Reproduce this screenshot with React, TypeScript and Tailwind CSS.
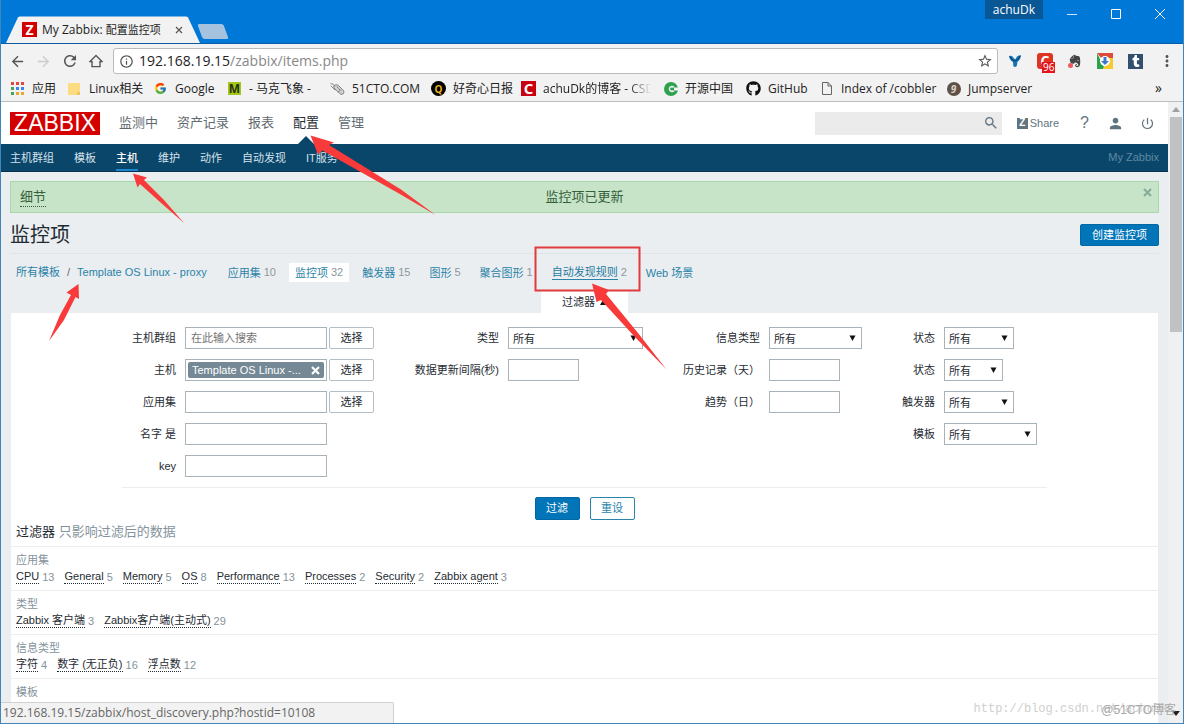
import type { ReactNode } from "react";
import { FaEvernote, FaGithub, FaTumblr } from "react-icons/fa";
import { FcGoogle } from "react-icons/fc";
import {
  MdArrowBack,
  MdArrowForward,
  MdInfoOutline,
  MdMoreVert,
  MdPerson,
  MdPowerSettingsNew,
  MdRefresh,
  MdSearch,
  MdStarBorder,
} from "react-icons/md";

const chromeFont = "font-['Open_Sans','Noto_Sans_CJK_SC',sans-serif]";
const pageFont = "font-['Liberation_Sans','Noto_Sans_CJK_SC',sans-serif]";

/* ---------- Browser window ---------- */

function TitleBar() {
  return (
    <div className="flex h-11 shrink-0 items-start justify-between border-b border-[#0c5ba6] bg-[#0078d7]">
      <div className="flex h-full items-end pl-[5px]">
        <div className="relative flex h-[27px] w-[194px] items-center pr-4 pl-4">
          <svg className="absolute inset-0 h-full w-full" viewBox="0 0 195 27" preserveAspectRatio="none" aria-hidden="true">
            <path d="M0 27 L12 1.5 Q13 0.5 14 0.5 H181 Q182 0.5 183 1.5 L195 27 Z" fill="#f2f2f2" />
          </svg>
          <span className="relative flex size-[15px] shrink-0 items-center justify-center bg-[#d40000] text-[14px] leading-none font-bold text-white">
            Z
          </span>
          <span className="relative ml-[5px] flex-1 text-[12px] leading-4 whitespace-nowrap text-[#222]">
            My Zabbix: <span className="text-[11px]">配置监控项</span>
          </span>
          <button className="relative p-px" aria-label="关闭标签页">
            <svg width="8" height="8" viewBox="0 0 8 8" aria-hidden="true">
              <path d="M1 1 L7 7 M7 1 L1 7" stroke="#555" strokeWidth="1.2" />
            </svg>
          </button>
        </div>
        <button className="mb-1 h-[15px] w-[26px] skew-x-[20deg] rounded-xs bg-[#a5c3de]" aria-label="新标签页" />
      </div>
      <div className="flex items-start pr-[18px] text-white">
        <button className="h-[19px] bg-[#0a5796] px-2 text-[12px] leading-[19px]">achuDk</button>
        <button className="ml-6 flex h-7 w-[10px] items-center" aria-label="最小化">
          <svg width="10" height="10" viewBox="0 0 10 10" aria-hidden="true"><path d="M0 5.5H10" stroke="#cfe6fa" /></svg>
        </button>
        <button className="ml-[34px] flex h-7 items-center" aria-label="最大化">
          <svg width="10" height="10" viewBox="0 0 10 10" aria-hidden="true"><path d="M.5 .5H9.5V9.5H.5Z" fill="none" stroke="#fff" /></svg>
        </button>
        <button className="ml-[34px] flex h-7 items-center" aria-label="关闭">
          <svg width="10" height="10" viewBox="0 0 10 10" aria-hidden="true"><path d="M0 0L10 10M10 0L0 10" stroke="#fff" /></svg>
        </button>
      </div>
    </div>
  );
}

function Toolbar() {
  return (
    <div className="flex h-[34px] shrink-0 items-center bg-[#f2f2f2] pr-[7px] pl-[8px] text-[#555]">
      <button aria-label="后退"><MdArrowBack size={17} /></button>
      <button className="ml-[9px] text-[#ccc]" aria-label="前进"><MdArrowForward size={17} /></button>
      <button className="ml-[9px]" aria-label="刷新"><MdRefresh size={18} /></button>
      <button className="ml-[10px]" aria-label="主页">
        <svg width="14" height="14" viewBox="0 0 14 14" fill="none" stroke="#555" strokeWidth="1.4" aria-hidden="true">
          <path d="M1 7.6 L7 1.6 L13 7.6 H11 V12.6 H3 V7.6 Z" />
        </svg>
      </button>
      <div className="ml-[10px] flex h-[26px] flex-1 items-center rounded-[3px] border border-[#bbb] bg-white pr-[4px] pl-[5px]">
        <MdInfoOutline size={15} />
        <span className="ml-[5px] flex-1 text-[14px] leading-5 whitespace-nowrap text-[#888]">
          <span className="text-[#222]">192.168.19.15</span>/zabbix/items.php
        </span>
        <button aria-label="收藏"><MdStarBorder size={16} /></button>
      </div>
      <div className="ml-[10px] flex items-center gap-[15px]">
        <svg width="14" height="14" viewBox="0 0 14 14" aria-hidden="true">
          <path d="M1 2 Q3.500 1.500 4.500 2.500 L7 5.500 L9.500 2 L13 1 Q12.800 5.500 9.500 7.800 L8.800 12 Q7 14 5.300 12 L5 8 Q1.500 6 1 2Z" fill="#1773b5" />
          <path d="M2 2.500 Q3 6 7 7 Q11 6 12 2" stroke="#0b3e6b" fill="none" />
        </svg>
        <span className="relative flex size-4 items-center justify-center rounded-[3px] bg-[#e03422] text-[14px] leading-none font-bold text-white">
          C
          <span className="absolute top-[9px] left-[5px] bg-[#e5141b] px-px text-[10px] leading-[11px] font-normal">96</span>
        </span>
        <span className="relative">
          <FaEvernote size={14} color="#444" />
          <span className="absolute bottom-0 left-0 size-[5px] rounded-full bg-[#ef5a5f]" />
        </span>
        <svg width="16" height="16" viewBox="0 0 16 16" aria-hidden="true">
          <rect width="16" height="16" fill="#fff" />
          <path d="M0 0H16V5L8 5L4 5Z" fill="#dd4b39" />
          <path d="M0 0L7 14L6 16H0Z" fill="#2ba24c" />
          <path d="M16 5V16H6L12 5Z" fill="#f6cb2f" />
          <circle cx="8" cy="8" r="5" fill="#fff" />
          <path d="M6.500 4H9.500V8H12L8 12L4 8H6.500Z" fill="#3c78c8" />
        </svg>
        <span className="flex size-[15px] items-center justify-center bg-[#32506d] text-white"><FaTumblr size={12} /></span>
        <button aria-label="菜单"><MdMoreVert size={18} /></button>
      </div>
    </div>
  );
}

function LetterIcon({ className, children }: { className: string; children: ReactNode }) {
  return (
    <span className={"flex shrink-0 items-center justify-center leading-none font-bold " + className}>{children}</span>
  );
}

function AppsIcon() {
  const colors = ["#e0483e", "#e0483e", "#e0483e", "#3fa757", "#3d84f0", "#3d84f0", "#3fa757", "#e9a72d", "#e9a72d"];
  return (
    <svg width="13" height="13" viewBox="0 0 13 13" aria-hidden="true">
      {colors.map((c, i) => (
        <rect key={i} x={(i % 3) * 5} y={Math.floor(i / 3) * 5} width="3" height="3" fill={c} />
      ))}
    </svg>
  );
}

const bookmarks: { label: string; width: string; icon: ReactNode; fade?: boolean }[] = [
  { label: "应用", width: "w-[57px]", icon: <AppsIcon /> },
  {
    label: "Linux相关",
    width: "w-[86px]",
    icon: (
      <svg width="13" height="14" viewBox="0 0 13 14" aria-hidden="true">
        <path d="M1 1H11Q12 1 12 2V13H1Q0 13 0 12V2Q0 1 1 1Z" fill="#fbdc80" />
        <path d="M9 13V10H12V13Z" fill="#f0c659" />
      </svg>
    ),
  },
  { label: "Google", width: "w-[74px]", icon: <FcGoogle size={13} /> },
  { label: "- 马克飞象 -", width: "w-[103px]", icon: <LetterIcon className="size-[13px] bg-[#a3c61c] text-[12px] text-[#26330b]">M</LetterIcon> },
  {
    label: "51CTO.COM",
    width: "w-[101px]",
    icon: (
      <svg width="15" height="14" viewBox="0 0 15 14" fill="none" stroke="#888" strokeLinecap="round" aria-hidden="true">
        <path d="M4 4Q6 1 9 4L14 9Q14.500 12.500 11 12.500L5 7Q3 5.500 4 4Z" fill="#d2d2d2" />
        <path d="M1 1.500Q3 1 4.500 4M1 4L5 8M7 4.500L10 8M8 10L11 8" />
      </svg>
    ),
  },
  { label: "好奇心日报", width: "w-[90px]", icon: <LetterIcon className="size-[15px] rounded-full bg-black text-[10px] text-[#e8b517]">Q</LetterIcon> },
  { label: "achuDk的博客 - CSDN", width: "w-[142px]", fade: true, icon: <LetterIcon className="size-[15px] bg-[#c8000f] text-[15px] text-white">C</LetterIcon> },
  {
    label: "开源中国",
    width: "w-[83px]",
    icon: (
      <svg width="14" height="14" viewBox="0 0 14 14" aria-hidden="true">
        <circle cx="7" cy="7" r="7" fill="#2fa14e" />
        <path d="M10.800 5.200A3.300 3.300 0 1 0 10.800 8.800L8 8.200A1.300 1.300 0 1 1 8 5.800Z" fill="#f2f2f2" />
        <path d="M10 5.500H14V8.500H10Z" fill="#f2f2f2" />
      </svg>
    ),
  },
  { label: "GitHub", width: "w-[73px]", icon: <FaGithub size={15} color="#111" /> },
  {
    label: "Index of /cobbler",
    width: "w-[127px]",
    icon: (
      <svg width="10" height="13" viewBox="0 0 10 13" fill="none" stroke="#666" aria-hidden="true">
        <path d="M.5 .5H6L9.500 4V12.500H.5ZM6 .5V4H9.500" />
      </svg>
    ),
  },
  { label: "Jumpserver", width: "w-[90px]", icon: <LetterIcon className="size-[14px] rounded-full bg-[#5d5148] text-[10px] text-[#ded3c6] italic">9</LetterIcon> },
];

function BookmarksBar() {
  return (
    <div className="flex h-6 shrink-0 items-center justify-between border-b border-[#bdbdbd] bg-[#f2f2f2] pr-[21px] pb-[2px] pl-[9px] text-[#222]">
      <div className="flex items-center">
        {bookmarks.map((b) => (
          <a key={b.label} href="#" className={"flex shrink-0 items-center gap-[7px] text-[12px] leading-4 whitespace-nowrap " + b.width}>
            <span className="flex w-[15px] shrink-0 justify-center">{b.icon}</span>
            <span
              className={
                b.fade
                  ? "w-[108px] overflow-hidden [mask-image:linear-gradient(to_right,black_80%,transparent)]"
                  : ""
              }
            >
              {b.label}
            </span>
          </a>
        ))}
      </div>
      <button className="pb-[2px] text-[14px] leading-4" aria-label="更多书签">»</button>
    </div>
  );
}

/* ---------- Zabbix page ---------- */

function PageHeader() {
  return (
    <header className="flex h-[42px] shrink-0 items-center bg-white pr-[13px] pl-[9px]">
      <a href="#" className="flex h-[23px] w-[90px] items-center justify-center bg-[#d40000] text-[23px] leading-none text-white">
        ZABBIX
      </a>
      <nav className="ml-[19px] flex h-full items-center gap-[19px] text-[13px] text-[#5f6b72]">
        <a href="#">监测中</a>
        <a href="#">资产记录</a>
        <a href="#">报表</a>
        <a href="#" className="relative flex h-full items-center text-[#1f2c33]">
          配置
          <span className="absolute bottom-0 left-1/2 -translate-x-1/2 border-x-[8px] border-b-[8px] border-x-transparent border-b-[#0a466a]" />
        </a>
        <a href="#">管理</a>
      </nav>
      <div className="ml-auto flex items-center text-[#5f7480]">
        <div className="flex h-[23px] w-[187px] items-center bg-[#ebebeb] pr-[3px]">
          <input aria-label="搜索" className="h-full min-w-0 flex-1 bg-transparent px-2 text-[11px] outline-none" />
          <button aria-label="搜索"><MdSearch size={16} /></button>
        </div>
        <a href="#" className="ml-[15px] flex items-center gap-[2px] text-[11px]">
          <span className="flex size-[11px] items-center justify-center bg-[#5f7480] text-[10px] leading-none font-bold text-white">Z</span>
          Share
        </a>
        <a href="#" className="ml-[21px] text-[16px] leading-none" aria-label="帮助">?</a>
        <a href="#" className="ml-[18px]" aria-label="用户"><MdPerson size={17} /></a>
        <a href="#" className="ml-[16px]" aria-label="退出"><MdPowerSettingsNew size={15} /></a>
      </div>
    </header>
  );
}

const subMenu = ["主机群组", "模板", "主机", "维护", "动作", "自动发现", "IT服务"];

function SubMenu() {
  return (
    <nav className="flex h-[28px] shrink-0 items-center justify-between border-b border-[#06324d] bg-[#0a466a] pr-[9px] pl-[9px] text-[11px] text-[#d5e2ea]">
      <div className="flex h-full items-center gap-[20px]">
        {subMenu.map((m) => (
          <a
            key={m}
            href="#"
            className={
              m === "主机"
                ? "flex h-full items-center border-b-2 border-[#1b87d1] pt-[3px] font-medium text-white"
                : "flex h-full items-center pt-px"
            }
          >
            {m}
          </a>
        ))}
      </div>
      <span className="text-[#5f8aa3]">My Zabbix</span>
    </nav>
  );
}

function Tab({ label, count, kind }: { label: string; count?: number; kind?: "current" | "hover" }) {
  return (
    <li className={kind === "current" ? "flex h-[19px] items-center gap-[3px] bg-white px-[6px]" : "flex h-[19px] items-center gap-[3px] px-[6px]"}>
      <a href="#" className={kind === "hover" ? "border-b border-[#2a83a8] leading-[14px] text-[#1f7aa0]" : "leading-[14px] text-[#2a83a8]"}>
        {label}
      </a>
      {count !== undefined && <span className="text-[#8b989f]">{count}</span>}
    </li>
  );
}

function Field({ id, label, children }: { id: string; label: string; children: ReactNode }) {
  return (
    <>
      <label htmlFor={id} className="text-right whitespace-nowrap">{label}</label>
      <div className="flex h-[22px] gap-[2px]">{children}</div>
    </>
  );
}

function TextBox({ id, width, placeholder }: { id: string; width: string; placeholder?: string }) {
  return (
    <input
      id={id}
      placeholder={placeholder}
      className={"h-full border border-[#a9b4ba] bg-white px-[5px] text-[11px] outline-none placeholder:text-[#757575] " + width}
    />
  );
}

function DropDown({ id, width }: { id: string; width: string }) {
  return (
    <span className={"relative h-full " + width}>
      <select id={id} className="h-full w-full appearance-none border border-[#a9b4ba] bg-white px-[4px] pt-[2px] text-[11px] outline-none">
        <option>所有</option>
      </select>
      <svg className="pointer-events-none absolute top-2 right-[6px]" width="7" height="6" viewBox="0 0 7 6" aria-hidden="true">
        <path d="M.5 .5H6.500L3.500 6Z" fill="#111" />
      </svg>
    </span>
  );
}

function PickButton() {
  return <button type="button" className="h-full w-[45px] rounded-xs border border-[#b4bec4] bg-white text-[11px]">选择</button>;
}

function FilterForm() {
  return (
    <form>
      <div className="mx-auto flex w-fit items-start gap-[38px] border-b border-[#ebeef0] px-[10px] pt-[14px] pb-[10px]">
        <div className="grid grid-cols-[44px_auto] items-center gap-x-[9px] gap-y-[10px]">
          <Field id="groups" label="主机群组">
            <TextBox id="groups" width="w-[142px]" placeholder="在此输入搜索" />
            <PickButton />
          </Field>
          <Field id="hosts" label="主机">
            <div className="flex h-full w-[142px] items-center border border-[#a9b4ba] p-[2px]">
              <span className="flex h-4 w-full items-center justify-between rounded-xs bg-[#748995] pr-1 pl-[4px] text-white">
                Template OS Linux -...
                <button id="hosts" type="button" aria-label="移除">
                  <svg width="9" height="9" viewBox="0 0 9 9" aria-hidden="true"><path d="M1 1L8 8M8 1L1 8" stroke="#fff" strokeWidth="2.200" /></svg>
                </button>
              </span>
            </div>
            <PickButton />
          </Field>
          <Field id="application" label="应用集">
            <TextBox id="application" width="w-[142px]" />
            <PickButton />
          </Field>
          <Field id="name" label="名字 是">
            <TextBox id="name" width="w-[142px]" />
          </Field>
          <Field id="key" label="key">
            <TextBox id="key" width="w-[142px]" />
          </Field>
        </div>
        <div className="grid grid-cols-[87px_auto] items-center gap-x-[9px] gap-y-[10px]">
          <Field id="type" label="类型"><DropDown id="type" width="w-[135px]" /></Field>
          <Field id="delay" label="数据更新间隔(秒)"><TextBox id="delay" width="w-[71px]" /></Field>
        </div>
        <div className="grid grid-cols-[79px_auto] items-center gap-x-[9px] gap-y-[10px]">
          <Field id="valueType" label="信息类型"><DropDown id="valueType" width="w-[93px]" /></Field>
          <Field id="history" label="历史记录（天）"><TextBox id="history" width="w-[71px]" /></Field>
          <Field id="trends" label="趋势（日）"><TextBox id="trends" width="w-[71px]" /></Field>
        </div>
        <div className="grid grid-cols-[35px_auto] items-center gap-x-[9px] gap-y-[10px]">
          <Field id="status" label="状态"><DropDown id="status" width="w-[70px]" /></Field>
          <Field id="state" label="状态"><DropDown id="state" width="w-[59px]" /></Field>
          <Field id="triggers" label="触发器"><DropDown id="triggers" width="w-[70px]" /></Field>
          <Field id="template" label="模板"><DropDown id="template" width="w-[93px]" /></Field>
        </div>
      </div>
      <div className="flex h-[34px] items-start justify-center gap-[10px] pt-[9px] text-[11px]">
        <button type="button" className="h-[23px] w-[45px] rounded-xs border border-[#0268a5] bg-[#0275b8] text-white">过滤</button>
        <button type="button" className="h-[23px] w-[45px] rounded-xs border border-[#2a83a8] bg-white text-[#2a83a8]">重设</button>
      </div>
    </form>
  );
}

const subfilters: { title: string; items: [string, number][] }[] = [
  {
    title: "应用集",
    items: [["CPU", 13], ["General", 5], ["Memory", 5], ["OS", 8], ["Performance", 13], ["Processes", 2], ["Security", 2], ["Zabbix agent", 3]],
  },
  { title: "类型", items: [["Zabbix 客户端", 3], ["Zabbix客户端(主动式)", 29]] },
  { title: "信息类型", items: [["字符", 4], ["数字 (无正负)", 16], ["浮点数", 12]] },
  { title: "模板", items: [["继承的监控项", 0], ["非继承监控项", 32]] },
];

function Subfilters() {
  return (
    <section>
      <h2 className="mb-[4px] px-[5px] text-[13px] leading-[20px]">
        过滤器 <span className="text-[#84939c]">只影响过滤后的数据</span>
      </h2>
      {subfilters.map((s) => (
        <div key={s.title} className="h-[44px] border-t border-[#ebeef0] px-[5px] pt-[5px]">
          <h3 className="leading-4 text-[#84939c]">{s.title}</h3>
          <ul className="mt-px flex gap-[10px] leading-4">
            {s.items.map(([name, count]) => (
              <li key={name} className="flex items-center gap-[3px] whitespace-nowrap">
                <a href="#" className="border-b border-dotted border-[#1f2c33] leading-[13px]">{name}</a>
                <span className="text-[#84939c]">{count}</span>
              </li>
            ))}
          </ul>
        </div>
      ))}
    </section>
  );
}

function Main() {
  return (
    <main className="min-h-0 flex-1 overflow-hidden px-[9px] pt-[9px] text-[11px] text-[#1f2c33]">
      <div className="relative flex h-8 items-center justify-center border border-[#a9d8ab] bg-[#c7e4c8] text-[13px] text-[#35603a]">
        <a href="#" className="absolute top-[5px] left-[9px] border-b border-dotted border-[#35603a] leading-[19px]">细节</a>
        监控项已更新
        <button className="absolute top-[6px] right-[6px]" aria-label="关闭">
          <svg width="9" height="9" viewBox="0 0 9 9" aria-hidden="true"><path d="M1 1L8 8M8 1L1 8" stroke="#86aa95" strokeWidth="2" /></svg>
        </button>
      </div>
      <div className="flex h-[41px] items-center justify-between border-b border-[#dfe4e7] pt-[4px]">
        <h1 className="text-[20px] leading-none">监控项</h1>
        <button className="h-[22px] w-[79px] rounded-xs border border-[#0268a5] bg-[#0275b8] text-white">创建监控项</button>
      </div>
      <ul className="mt-[9px] flex items-center whitespace-nowrap">
        <li className="flex items-center gap-[7px] pl-[6px] text-[#2a83a8]">
          <a href="#">所有模板</a>
          <span className="text-[#5f6b72]">/</span>
          <a href="#">Template OS Linux - proxy</a>
        </li>
        <li className="ml-[15px]">
          <ul className="flex items-center gap-[7px]">
            <Tab label="应用集" count={10} />
            <Tab label="监控项" count={32} kind="current" />
            <Tab label="触发器" count={15} />
            <Tab label="图形" count={5} />
            <Tab label="聚合图形" count={1} />
            <Tab label="自动发现规则" count={2} kind="hover" />
            <Tab label="Web 场景" />
          </ul>
        </li>
      </ul>
      <div className="mt-[9px] flex justify-center">
        <button className="flex h-[22px] w-[87px] items-center justify-center gap-[5px] bg-white">
          过滤器
          <svg width="7" height="6" viewBox="0 0 7 6" aria-hidden="true"><path d="M3.500 0L7 6H0Z" fill="#111" /></svg>
        </button>
      </div>
      <div className="mx-px h-full bg-white">
        <FilterForm />
        <Subfilters />
      </div>
    </main>
  );
}

function ScrollBar() {
  return (
    <div className="flex w-[15px] shrink-0 flex-col items-center bg-[#f0f0f0] pb-[7px]" aria-hidden="true">
      <svg className="my-[5px]" width="8" height="5" viewBox="0 0 8 5"><path d="M4 0L8 5H0Z" fill="#a0a0a0" /></svg>
      <div className="h-[35%] w-[12px] bg-[#c1c1c1]" />
      <svg className="mt-auto" width="8" height="5" viewBox="0 0 8 5"><path d="M4 5L8 0H0Z" fill="#222" /></svg>
    </div>
  );
}

/* Hand-drawn red arrows and frame that lie over the page */
function Annotations() {
  return (
    <svg className="pointer-events-none absolute top-0 -left-px" width="1184" height="724" viewBox="0 0 1184 724" aria-hidden="true">
      <rect x="535.5" y="247.500" width="104" height="43" fill="none" stroke="#e23a3c" strokeWidth="2" />
      <g fill="#f83a3a">
        <path d="M310.500 135.500 L334 142.500 L329 145 L401 189.500 L435.500 215 L399 193.500 L322.500 150.500 L318 154.500Z" />
        <path d="M133 173.500 L147 177.500 L144 180 L164 200 L184 223 L160 202 L140 184 L137.500 187.500Z" />
        <path d="M78.500 284 L79 299 L75.500 297 L64 320 L49 341 L60 315 L71 295 L66.500 292.500Z" />
        <path d="M592 283.500 L609 290 L606 294 L638 333 L666.500 369.500 L634 336 L601 300 L596.500 302Z" />
      </g>
    </svg>
  );
}

export default function App() {
  return (
    <div className={"relative flex h-screen flex-col overflow-hidden border-x border-b border-[#3f86bd] bg-[#ebeef0] " + chromeFont}>
      <TitleBar />
      <Toolbar />
      <BookmarksBar />
      <div className="flex min-h-0 flex-1">
        <div className={"flex min-w-0 flex-1 flex-col text-[11px] " + pageFont}>
          <PageHeader />
          <SubMenu />
          <Main />
        </div>
        <ScrollBar />
      </div>
      <div className="absolute bottom-0 left-0 h-[21px] w-[393px] rounded-tr-xs border-t border-r border-[#d0d0d0] bg-[#f2f2f2] px-[2px] text-[12px] leading-[20px] text-[#666]">
        192.168.19.15/zabbix/host_discovery.php?hostid=10108
      </div>
      <div className="pointer-events-none absolute right-[15px] bottom-[6px] font-['Liberation_Mono',monospace] text-[12px] leading-4 text-[#cfcfcf]">
        http://blog.csdn.net/achuDk
      </div>
      <div className={"pointer-events-none absolute right-[7px] bottom-[5px] text-[12px] leading-4 text-[#a8a8a8] " + pageFont}>
        @51CTO博客
      </div>
      <Annotations />
    </div>
  );
}
